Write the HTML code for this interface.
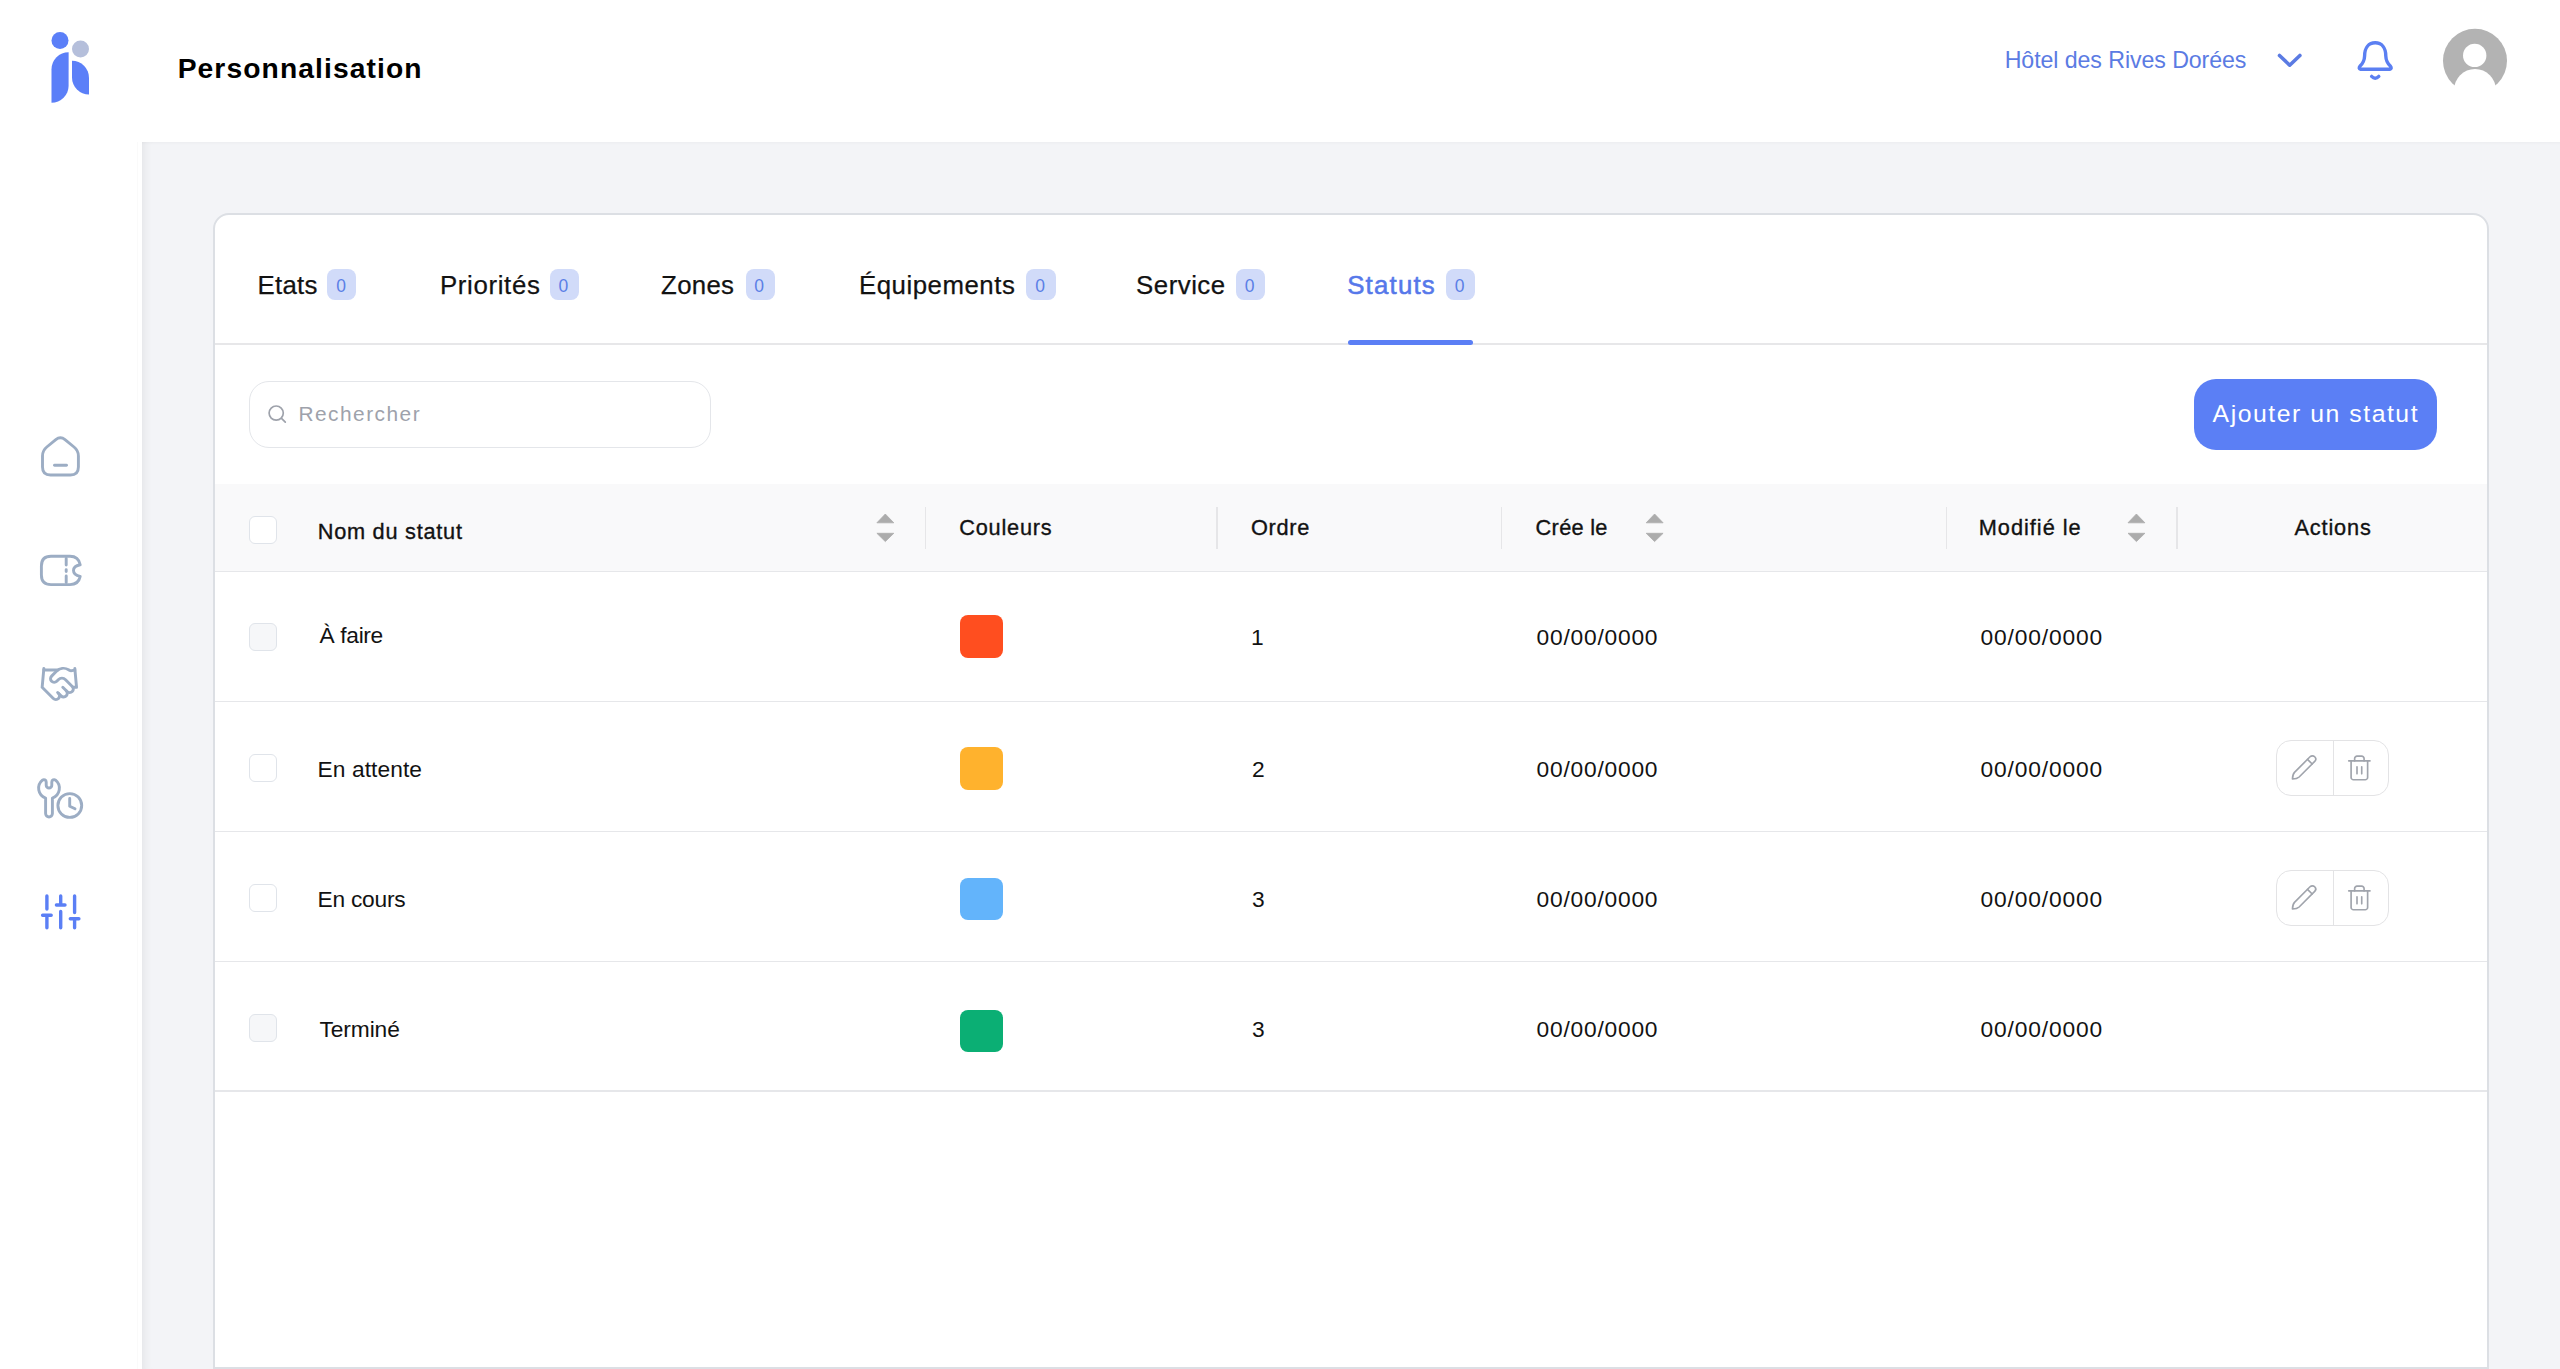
<!DOCTYPE html>
<html><head><meta charset="utf-8"><title>Personnalisation</title>
<style>
html,body{margin:0;padding:0;}
body{width:2560px;height:1369px;overflow:hidden;position:relative;background:#fff;font-family:"Liberation Sans",sans-serif;}
.t{position:absolute;white-space:nowrap;}
#main{position:absolute;left:142px;top:142px;width:2418px;height:1227px;background:#f3f4f7;box-shadow:inset 10px 0 10px -8px rgba(0,0,0,0.07), inset 0 3px 3px -2px rgba(0,0,0,0.035);}
#card{position:absolute;left:213px;top:213.3px;width:2275.5px;height:1156px;background:#fff;border:2px solid #dcdfe4;border-radius:16px 16px 0 0;box-sizing:border-box;}
.abs{position:absolute;}
</style></head><body>
<div id="main"></div>
<div class="abs" style="left:137px;top:142px;width:1px;height:1227px;background:#fafafa"></div>
<div id="card"></div>
<!-- tab divider -->
<div class="abs" style="left:215px;top:343px;width:2272px;height:2px;background:#e7e7e9"></div>
<div class="abs" style="left:1347.8px;top:339.7px;width:125.6px;height:5px;border-radius:3px;background:#5b7ff5"></div>
<!-- search -->
<div class="abs" style="left:249px;top:380.5px;width:461.5px;height:67px;box-sizing:border-box;border:1.5px solid #e4e6ea;border-radius:20px;background:#fff"></div>
<!-- button -->
<div class="abs" style="left:2193.75px;top:378.75px;width:243px;height:71px;border-radius:22px;background:#5b7ff5"></div>
<!-- table header -->
<div class="abs" style="left:215px;top:484px;width:2272px;height:87px;background:#f9f9fa"></div>
<div class="abs" style="left:215px;top:570.5px;width:2272px;height:1.5px;background:#e6e7ea"></div>
<div class="abs" style="left:215px;top:700.5px;width:2272px;height:1.5px;background:#e6e7ea"></div>
<div class="abs" style="left:215px;top:830.5px;width:2272px;height:1.5px;background:#e6e7ea"></div>
<div class="abs" style="left:215px;top:960.5px;width:2272px;height:1.5px;background:#e6e7ea"></div>
<div class="abs" style="left:215px;top:1090px;width:2272px;height:1.5px;background:#e6e7ea"></div>
<!-- col dividers -->
<div class="abs" style="left:924.5px;top:507px;width:1.5px;height:42px;background:#e6e6e8"></div>
<div class="abs" style="left:1216px;top:507px;width:1.5px;height:42px;background:#e6e6e8"></div>
<div class="abs" style="left:1500.5px;top:507px;width:1.5px;height:42px;background:#e6e6e8"></div>
<div class="abs" style="left:1945.5px;top:507px;width:1.5px;height:42px;background:#e6e6e8"></div>
<div class="abs" style="left:2176px;top:507px;width:1.5px;height:42px;background:#e6e6e8"></div>
<!-- checkboxes -->
<div class="abs" style="left:249.2px;top:515.5px;width:27.5px;height:28px;box-sizing:border-box;border:1.5px solid #e0e4ea;border-radius:6px;background:#fff"></div>
<div class="abs" style="left:249px;top:622.6px;width:27.5px;height:28px;box-sizing:border-box;border:1.5px solid #e0e4ea;border-radius:6px;background:#f6f7f9"></div>
<div class="abs" style="left:249px;top:754.4px;width:27.5px;height:28px;box-sizing:border-box;border:1.5px solid #e0e4ea;border-radius:6px;background:#fff"></div>
<div class="abs" style="left:249px;top:884.4px;width:27.5px;height:28px;box-sizing:border-box;border:1.5px solid #e0e4ea;border-radius:6px;background:#fff"></div>
<div class="abs" style="left:249px;top:1014.4px;width:27.5px;height:28px;box-sizing:border-box;border:1.5px solid #e0e4ea;border-radius:6px;background:#f6f7f9"></div>
<!-- swatches -->
<div class="abs" style="left:960px;top:615px;width:42.5px;height:42.5px;border-radius:8px;background:#ff4e1f"></div>
<div class="abs" style="left:960px;top:747px;width:42.5px;height:42.5px;border-radius:8px;background:#ffb22d"></div>
<div class="abs" style="left:960px;top:877.8px;width:42.5px;height:42.5px;border-radius:8px;background:#63b4fb"></div>
<div class="abs" style="left:960px;top:1009.5px;width:42.5px;height:42.5px;border-radius:8px;background:#0baf74"></div>
<!-- action groups -->
<div class="abs" style="left:2275.8px;top:740px;width:112.8px;height:55.6px;box-sizing:border-box;border:1.5px solid #e3e3e5;border-radius:15px"></div>
<div class="abs" style="left:2332.8px;top:740px;width:1.5px;height:55.6px;background:#e3e3e5"></div>
<div class="abs" style="left:2275.8px;top:870px;width:112.8px;height:55.6px;box-sizing:border-box;border:1.5px solid #e3e3e5;border-radius:15px"></div>
<div class="abs" style="left:2332.8px;top:870px;width:1.5px;height:55.6px;background:#e3e3e5"></div>
<!-- badges -->
<div class="abs" style="left:327.4px;top:269px;width:29.0px;height:30.8px;border-radius:8px;background:#d1dbf9"></div>
<div class="t" style="left:331.09999999999997px;top:276.6px;width:20px;text-align:center;font-size:17.5px;line-height:18px;color:#5b7fe6">0</div>
<div class="abs" style="left:549.5px;top:269px;width:29.200000000000045px;height:30.8px;border-radius:8px;background:#d1dbf9"></div>
<div class="t" style="left:553.3000000000001px;top:276.6px;width:20px;text-align:center;font-size:17.5px;line-height:18px;color:#5b7fe6">0</div>
<div class="abs" style="left:745.5px;top:269px;width:29.0px;height:30.8px;border-radius:8px;background:#d1dbf9"></div>
<div class="t" style="left:749.2px;top:276.6px;width:20px;text-align:center;font-size:17.5px;line-height:18px;color:#5b7fe6">0</div>
<div class="abs" style="left:1026px;top:269px;width:29.59999999999991px;height:30.8px;border-radius:8px;background:#d1dbf9"></div>
<div class="t" style="left:1030.0px;top:276.6px;width:20px;text-align:center;font-size:17.5px;line-height:18px;color:#5b7fe6">0</div>
<div class="abs" style="left:1235.6px;top:269px;width:29.40000000000009px;height:30.8px;border-radius:8px;background:#d1dbf9"></div>
<div class="t" style="left:1239.5px;top:276.6px;width:20px;text-align:center;font-size:17.5px;line-height:18px;color:#5b7fe6">0</div>
<div class="abs" style="left:1445.6px;top:269px;width:29.40000000000009px;height:30.8px;border-radius:8px;background:#d1dbf9"></div>
<div class="t" style="left:1449.5px;top:276.6px;width:20px;text-align:center;font-size:17.5px;line-height:18px;color:#5b7fe6">0</div>
<div class="t" style="left:177.65px;top:54.08px;font-size:28.26px;line-height:28.26px;letter-spacing:1.087px;color:#000;font-weight:700;">Personnalisation</div>
<div class="t" style="left:2004.7px;top:48.59px;font-size:23.19px;line-height:23.19px;letter-spacing:-0.086px;color:#5b7be3;">Hôtel des Rives Dorées</div>
<div class="t" style="left:257.6px;top:272.87px;font-size:25.8px;line-height:25.8px;letter-spacing:0.25px;color:#121212;-webkit-text-stroke:0.25px currentColor;">Etats</div>
<div class="t" style="left:440.0px;top:272.87px;font-size:25.8px;line-height:25.8px;letter-spacing:0.65px;color:#121212;-webkit-text-stroke:0.25px currentColor;">Priorités</div>
<div class="t" style="left:661.1px;top:272.87px;font-size:25.8px;line-height:25.8px;letter-spacing:0.3px;color:#121212;-webkit-text-stroke:0.25px currentColor;">Zones</div>
<div class="t" style="left:858.9px;top:272.87px;font-size:25.8px;line-height:25.8px;letter-spacing:0.54px;color:#121212;-webkit-text-stroke:0.25px currentColor;">Équipements</div>
<div class="t" style="left:1136.1px;top:272.87px;font-size:25.8px;line-height:25.8px;letter-spacing:0.5px;color:#121212;-webkit-text-stroke:0.25px currentColor;">Service</div>
<div class="t" style="left:1347.2px;top:272.87px;font-size:25.8px;line-height:25.8px;letter-spacing:1.2px;color:#5678ea;-webkit-text-stroke:0.55px currentColor;">Statuts</div>
<div class="t" style="left:298.4px;top:403.66px;font-size:20.87px;line-height:20.87px;letter-spacing:1.489px;color:#9ea2ab;">Rechercher</div>
<div class="t" style="left:2212.6px;top:401.93px;font-size:24.78px;line-height:24.78px;letter-spacing:1.538px;color:#fff;">Ajouter un statut</div>
<div class="t" style="left:317.7px;top:520.52px;font-size:21.74px;line-height:21.74px;letter-spacing:0.75px;color:#121212;-webkit-text-stroke:0.35px currentColor;">Nom du statut</div>
<div class="t" style="left:959.3px;top:517.22px;font-size:21.74px;line-height:21.74px;letter-spacing:0.771px;color:#121212;-webkit-text-stroke:0.35px currentColor;">Couleurs</div>
<div class="t" style="left:1251.0px;top:517.22px;font-size:21.74px;line-height:21.74px;letter-spacing:0.7px;color:#121212;-webkit-text-stroke:0.35px currentColor;">Ordre</div>
<div class="t" style="left:1535.6px;top:517.22px;font-size:21.74px;line-height:21.74px;letter-spacing:0.3px;color:#121212;-webkit-text-stroke:0.35px currentColor;">Crée le</div>
<div class="t" style="left:1978.7px;top:517.22px;font-size:21.74px;line-height:21.74px;letter-spacing:1.0px;color:#121212;-webkit-text-stroke:0.35px currentColor;">Modifié le</div>
<div class="t" style="left:2294.4px;top:517.22px;font-size:21.74px;line-height:21.74px;letter-spacing:0.867px;color:#121212;-webkit-text-stroke:0.35px currentColor;">Actions</div>
<div class="t" style="left:319.5px;top:624.46px;font-size:22.75px;line-height:22.75px;letter-spacing:-0.333px;color:#121212;">À faire</div>
<div class="t" style="left:1251.0px;top:626.22px;font-size:22.8px;line-height:22.8px;letter-spacing:0px;color:#121212;">1</div>
<div class="t" style="left:1536.6px;top:626.22px;font-size:22.8px;line-height:22.8px;letter-spacing:0.756px;color:#121212;">00/00/0000</div>
<div class="t" style="left:1980.5px;top:626.22px;font-size:22.8px;line-height:22.8px;letter-spacing:0.844px;color:#121212;">00/00/0000</div>
<div class="t" style="left:317.5px;top:757.56px;font-size:22.75px;line-height:22.75px;letter-spacing:0.089px;color:#121212;">En attente</div>
<div class="t" style="left:1252.0px;top:757.52px;font-size:22.8px;line-height:22.8px;letter-spacing:0px;color:#121212;">2</div>
<div class="t" style="left:1536.6px;top:757.52px;font-size:22.8px;line-height:22.8px;letter-spacing:0.756px;color:#121212;">00/00/0000</div>
<div class="t" style="left:1980.5px;top:757.52px;font-size:22.8px;line-height:22.8px;letter-spacing:0.844px;color:#121212;">00/00/0000</div>
<div class="t" style="left:317.5px;top:887.86px;font-size:22.75px;line-height:22.75px;letter-spacing:-0.229px;color:#121212;">En cours</div>
<div class="t" style="left:1252.0px;top:887.82px;font-size:22.8px;line-height:22.8px;letter-spacing:0px;color:#121212;">3</div>
<div class="t" style="left:1536.6px;top:887.82px;font-size:22.8px;line-height:22.8px;letter-spacing:0.756px;color:#121212;">00/00/0000</div>
<div class="t" style="left:1980.5px;top:887.82px;font-size:22.8px;line-height:22.8px;letter-spacing:0.844px;color:#121212;">00/00/0000</div>
<div class="t" style="left:319.5px;top:1018.16px;font-size:22.75px;line-height:22.75px;letter-spacing:-0.1px;color:#121212;">Terminé</div>
<div class="t" style="left:1252.0px;top:1018.12px;font-size:22.8px;line-height:22.8px;letter-spacing:0px;color:#121212;">3</div>
<div class="t" style="left:1536.6px;top:1018.12px;font-size:22.8px;line-height:22.8px;letter-spacing:0.756px;color:#121212;">00/00/0000</div>
<div class="t" style="left:1980.5px;top:1018.12px;font-size:22.8px;line-height:22.8px;letter-spacing:0.844px;color:#121212;">00/00/0000</div>
<svg class="abs" style="left:0;top:0" width="2560" height="1369" viewBox="0 0 2560 1369">
<!-- logo -->
<circle cx="60" cy="40.4" r="8.5" fill="#5b7ff8"/>
<circle cx="80.5" cy="49" r="8.5" fill="#b5bfdb"/>
<path d="M68.6 52.2 L68.6 85.7 A17.1 17.1 0 0 1 51.5 102.8 L51.5 69.3 A17.1 17.1 0 0 1 68.6 52.2 Z" fill="#5b7ff8"/>
<path d="M72 60.7 A17 17 0 0 1 89 77.7 L89 94.6 A17 17 0 0 1 72 77.6 Z" fill="#5b7ff8"/>
<!-- chevron -->
<path d="M2279.5 55.5 L2289.7 65.2 L2299.9 55.5" fill="none" stroke="#5b7be3" stroke-width="3.6" stroke-linecap="round" stroke-linejoin="round"/>
<!-- bell -->
<g fill="none" stroke="#5b7ff2" stroke-width="3.4" stroke-linecap="round" stroke-linejoin="round">
<path d="M2364.6 56 C2364.6 47.5 2368.8 42.8 2375.2 42.8 C2381.6 42.8 2385.8 47.5 2385.8 56 Q2386 62 2390.3 66 Q2392.3 68.8 2389.8 69.3 L2360.6 69.3 Q2358.1 68.8 2360.1 66 Q2364.4 62 2364.6 56 Z"/>
<path d="M2371.6 76.4 Q2375.2 80.2 2378.8 76.4"/>
</g>
<!-- avatar -->
<defs><clipPath id="avc"><circle cx="2475" cy="60.8" r="32"/></clipPath></defs>
<circle cx="2475" cy="60.8" r="32" fill="#b3b3b3"/>
<circle cx="2474.7" cy="55.4" r="11.7" fill="#fff"/>
<circle cx="2475" cy="90" r="21" fill="#fff"/>
<!-- search icon -->
<g fill="none" stroke="#9ea2ab" stroke-width="1.7" stroke-linecap="round">
<circle cx="276.2" cy="413.1" r="7.1"/>
<path d="M281.5 418.4 L285.3 422.2"/>
</g>
<!-- sort icons -->
<path d="M885.3 514 L893.8 522.8 L876.9 522.8 Z M876.9 533.3 L893.8 533.3 L885.3 541.6 Z" fill="#acacac" stroke="#acacac" stroke-width="0.8" stroke-linejoin="round"/>
<path d="M1654.6000000000001 514 L1663.1000000000001 522.8 L1646.2 522.8 Z M1646.2 533.3 L1663.1000000000001 533.3 L1654.6000000000001 541.6 Z" fill="#acacac" stroke="#acacac" stroke-width="0.8" stroke-linejoin="round"/>
<path d="M2136.4 514 L2144.9 522.8 L2128.0 522.8 Z M2128.0 533.3 L2144.9 533.3 L2136.4 541.6 Z" fill="#acacac" stroke="#acacac" stroke-width="0.8" stroke-linejoin="round"/>
<g fill="none" stroke="#9cadc4" stroke-width="2.9" stroke-linecap="round" stroke-linejoin="round">
<path d="M42.5 456 Q42.5 450.5 46.8 447 L55.8 439.6 Q60.4 435.9 65 439.6 L74 447 Q78.4 450.5 78.4 456 L78.4 467 Q78.4 475 70.4 475 L50.5 475 Q42.5 475 42.5 467 Z"/>
<path d="M54.5 465.2 L66.5 465.2"/>
<path d="M51 556.3 L70 556.3 Q78.5 556.3 80.2 564.8 Q73.5 566 73.5 570.6 Q73.5 575.2 80.2 576.4 Q78.5 584.6 70 584.6 L51 584.6 Q41.4 584.6 41.4 575 L41.4 566 Q41.4 556.3 51 556.3 Z"/>
<path d="M66.2 558.5 L66.2 565 M66.2 569.6 L66.2 571.6 M66.2 576 L66.2 582.5"/>
</g>
<g fill="none" stroke="#9cadc4" stroke-width="1.7" stroke-linecap="round" stroke-linejoin="round" transform="translate(38.7 663.2) scale(1.72)">
<path d="m11 17 2 2a1 1 0 1 0 3-3"/>
<path d="m14 14 2.5 2.5a1 1 0 1 0 3-3l-3.88-3.88a3 3 0 0 0-4.24 0l-.88.88a1 1 0 1 1-3-3l2.81-2.81a5.79 5.79 0 0 1 7.06-.87l.47.28a2 2 0 0 0 1.42.25L21 4"/>
<path d="m21 3 1 11h-2"/>
<path d="M3 3 2 14l6.5 6.5a1 1 0 1 0 3-3"/>
<path d="M3 4h8"/>
</g>
<g fill="none" stroke="#9cadc4" stroke-width="2.9" stroke-linecap="round" stroke-linejoin="round">
<path d="M46.2 782 A2.3 2.3 0 0 0 42.45 780.22 A10.4 10.4 0 0 0 45.6 798.1 L45.6 813.6 A3.4 3.4 0 0 0 52.4 813.6 L52.4 798.1 A10.4 10.4 0 0 0 55.55 780.22 A2.3 2.3 0 0 0 51.8 782 L51.8 785.2 A2.8 2.8 0 0 1 46.2 785.2 Z"/>
<circle cx="69.8" cy="805.5" r="11.9"/>
<path d="M69.7 798.5 L69.7 806.2 L75 808.8"/>
</g>
<g fill="none" stroke="#5b7ff5" stroke-width="3.4" stroke-linecap="round">
<path d="M46.9 895.9 L46.9 909 M42.6 915.3 L51.2 915.3 M46.9 915.3 L46.9 927.8"/>
<path d="M60.7 895.9 L60.7 905 M56.4 905 L65 905 M60.7 911.5 L60.7 927.8"/>
<path d="M74.6 895.9 L74.6 912.5 M70.3 918.8 L78.9 918.8 M74.6 918.8 L74.6 927.8"/>
</g>
<!-- action icons -->
<g fill="none" stroke="#a0a4ac" stroke-width="1.4" stroke-linecap="round" stroke-linejoin="round" transform="translate(2290 753.5) scale(1.167)">
<path d="M21.174 6.812a1 1 0 0 0-3.986-3.987L3.842 16.174Q2.2 17.9 2.1 21.9Q6.1 21.8 7.828 20.16z"/>
<path d="m15 5 4 4"/>
</g>
<g fill="none" stroke="#a0a4ac" stroke-width="1.4" stroke-linecap="round" stroke-linejoin="round" transform="translate(2345.2 753.8) scale(1.18)">
<path d="M3 6h18"/>
<path d="M19 6v14c0 1-1 2-2 2H7c-1 0-2-1-2-2V6"/>
<path d="M8 6V4c0-1 1-2 2-2h4c1 0 2 1 2 2v2"/>
<path d="M10 11v6M14 11v6"/>
</g>
<g fill="none" stroke="#a0a4ac" stroke-width="1.4" stroke-linecap="round" stroke-linejoin="round" transform="translate(2290 883.5) scale(1.167)">
<path d="M21.174 6.812a1 1 0 0 0-3.986-3.987L3.842 16.174Q2.2 17.9 2.1 21.9Q6.1 21.8 7.828 20.16z"/>
<path d="m15 5 4 4"/>
</g>
<g fill="none" stroke="#a0a4ac" stroke-width="1.4" stroke-linecap="round" stroke-linejoin="round" transform="translate(2345.2 883.8) scale(1.18)">
<path d="M3 6h18"/>
<path d="M19 6v14c0 1-1 2-2 2H7c-1 0-2-1-2-2V6"/>
<path d="M8 6V4c0-1 1-2 2-2h4c1 0 2 1 2 2v2"/>
<path d="M10 11v6M14 11v6"/>
</g>
</svg>
</body></html>
